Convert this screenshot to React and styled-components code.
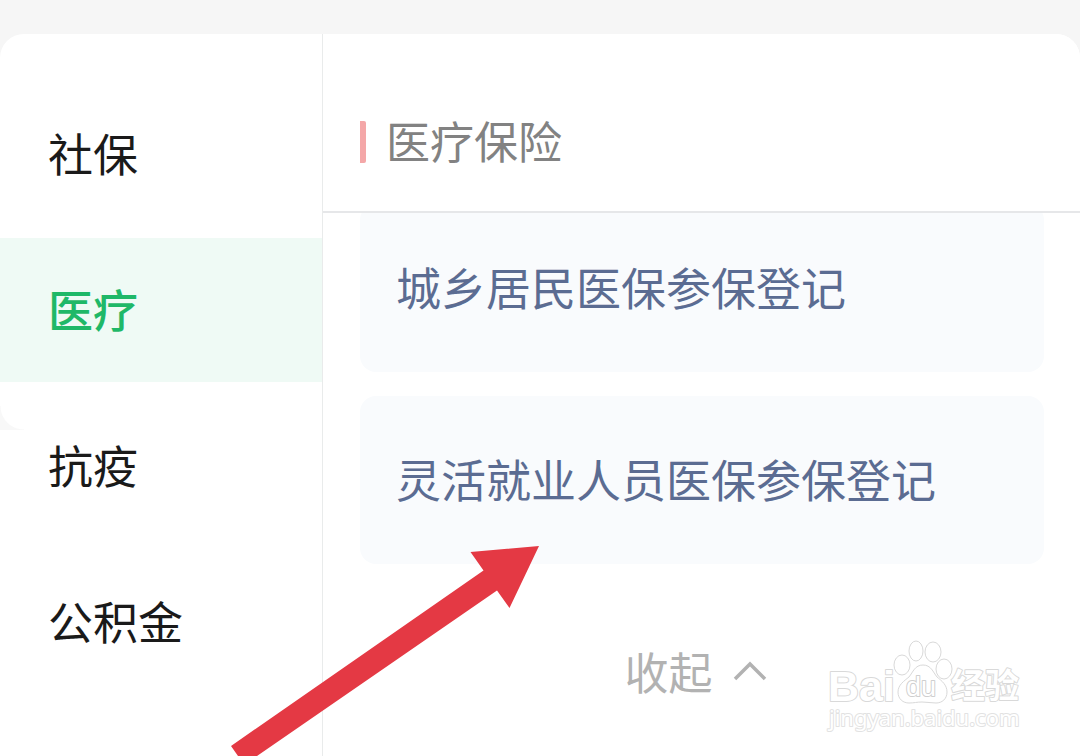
import React, { useState } from "react";
import styled, { createGlobalStyle } from "styled-components";

const GlobalStyle = createGlobalStyle`
  *, *::before, *::after { box-sizing: border-box; }
  body {
    margin: 0;
    background: #f6f6f6;
    font-family: "Noto Sans CJK SC", sans-serif;
  }
  button { font: inherit; border: 0; background: none; cursor: pointer; }
`;

const Page = styled.div`
  position: relative;
  display: flex;
  flex-direction: column;
  min-height: 100vh;
  padding-top: 34px;
  overflow: hidden;
`;

const Panel = styled.div`
  display: flex;
  flex: 1;
  background: #fff;
  border-radius: 24px 24px 0 0;
`;

const Sidebar = styled.nav`
  position: relative;
  display: flex;
  flex: 0 0 323px;
  flex-direction: column;
  gap: 12px;
  padding-top: 48px;
  border-right: 1px solid #e9ebeb;

  &::before {
    content: "";
    position: absolute;
    top: 372px;
    left: 0;
    width: 24px;
    height: 24px;
    background: radial-gradient(circle at 100% 0, transparent 23px, #f8f8f8 24px);
  }
`;

const Category = styled.button`
  height: 144px;
  padding: 0 48px 2px;
  text-align: left;
  font-size: 45px;
  line-height: 64px;
  font-weight: ${(p) => (p.$active ? 500 : 400)};
  color: ${(p) => (p.$active ? "#1fb868" : "#1a1a1a")};
  ${(p) => p.$active && "background: #effaf5;"}
`;

const Content = styled.main`
  flex: 1;
  min-width: 0;
`;

const Header = styled.header`
  position: relative;
  z-index: 1;
  display: flex;
  align-items: center;
  gap: 20px;
  height: 179px;
  padding: 38px 37px 0;
  background: #fff;
  border-bottom: 2px solid #e6e7e9;
  border-top-right-radius: 24px;
`;

const Marker = styled.span`
  width: 6px;
  height: 42px;
  border-radius: 0 2px 2px 0;
  background: #f4a7a8;
`;

const Title = styled.h1`
  margin: 0;
  padding-bottom: 4px;
  font-size: 44px;
  line-height: 64px;
  font-weight: 400;
  color: #828282;
`;

const ServiceList = styled.div`
  display: flex;
  flex-direction: column;
  gap: 24px;
  margin-top: -9px;
  padding: 0 36px 0 37px;
`;

const Service = styled.a`
  display: flex;
  align-items: center;
  height: 168px;
  padding: 0 36px 2px;
  border-radius: 16px;
  background: #f9fbfd;
  font-size: 45px;
  line-height: 64px;
  color: #5b6c92;
  text-decoration: none;
`;

const Collapse = styled.button`
  display: flex;
  align-items: center;
  gap: 20px;
  margin: 76px auto 0;
  padding: 0 12px 0 0;
  font-size: 44px;
  line-height: 62px;
  color: #b2b2b2;
`;

const Arrow = styled.svg`
  position: absolute;
  left: 230px;
  top: 546px;
  pointer-events: none;
`;

const Watermark = styled.svg`
  position: absolute;
  right: 50px;
  top: 636px;
  pointer-events: none;
  fill: #fff;
  stroke: #d9d9d9;
  stroke-linejoin: round;

  text { paint-order: stroke; stroke-width: 2px; }
`;

const categories = ["社保", "医疗", "抗疫", "公积金"];
const services = ["城乡居民医保参保登记", "灵活就业人员医保参保登记"];

export default function App() {
  const [active, setActive] = useState("医疗");
  return (
    <>
      <GlobalStyle />
      <Page>
        <Panel>
          <Sidebar>
            {categories.map((name) => (
              <Category
                key={name}
                type="button"
                $active={name === active}
                onClick={() => setActive(name)}
              >
                {name}
              </Category>
            ))}
          </Sidebar>
          <Content>
            <Header>
              <Marker />
              <Title>医疗保险</Title>
            </Header>
            <ServiceList>
              {services.map((name) => (
                <Service key={name} href="#">{name}</Service>
              ))}
            </ServiceList>
            <Collapse type="button">
              收起
              <svg width="34" height="20" viewBox="0 0 34 20" fill="none" stroke="currentColor" strokeWidth="3.500">
                <path d="M2 18 17 3l15 15" />
              </svg>
            </Collapse>
          </Content>
        </Panel>
        <Arrow width="310" height="210" viewBox="0 0 310 210" aria-hidden="true">
          <path fill="#e43944" d="M309 0 240.500 6l13 18.500L1 200l7 10h19L267 44.500 279.500 62Z" />
        </Arrow>
        <Watermark width="204" height="104" viewBox="0 0 204 104">
          <text x="2" y="65" fontFamily="Liberation Sans, sans-serif" fontWeight="700" fontSize="43">Bai</text>
          <ellipse cx="76" cy="29" rx="8" ry="10" />
          <ellipse cx="90" cy="15" rx="7" ry="10" />
          <ellipse cx="107" cy="16" rx="8" ry="10" />
          <ellipse cx="118" cy="33" rx="8" ry="10" />
          <path d="M97 29c-8 0-10 7-14 12-5 4-11 8-11 15 0 7 5 11 11 11 5 0 8-1 13-1s9 1 14 1c6 0 11-4 11-11 0-7-5-11-10-15-4-5-6-12-14-12Z" />
          <text x="80" y="60" stroke="#cfcfcf" fontFamily="Liberation Sans, sans-serif" fontSize="27">du</text>
          <text x="125" y="62" fontFamily="Noto Sans CJK SC, sans-serif" fontWeight="700" fontSize="34">经验</text>
          <text x="3" y="90" stroke="#e2e2e2" fontFamily="Noto Sans, sans-serif" fontSize="22">jingyan.baidu.com</text>
        </Watermark>
      </Page>
    </>
  );
}
